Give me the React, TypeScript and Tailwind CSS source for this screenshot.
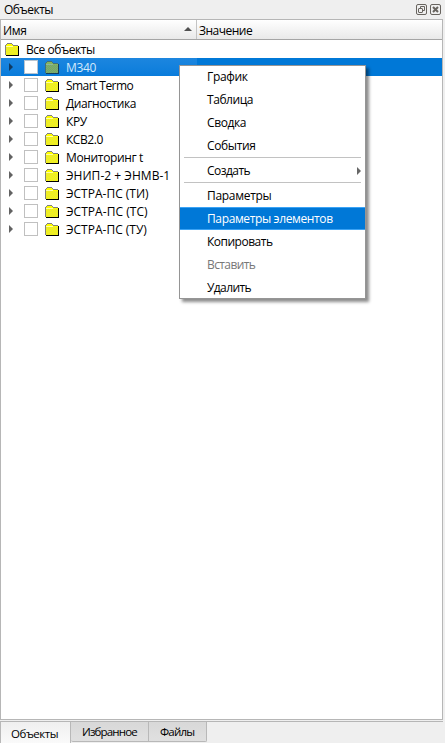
import React from "react";

const objects: [string, string][] = [
  ["M340", "tracking-[-0.3px]"],
  ["Smart Termo", "tracking-[-0.55px]"],
  ["Диагностика", "tracking-[-0.4px]"],
  ["КРУ", "tracking-[-0.4px]"],
  ["КСВ2.0", "tracking-[-0.45px]"],
  ["Мониторинг t", "tracking-[-0.35px]"],
  ["ЭНИП-2 + ЭНМВ-1", "tracking-[0.03px]"],
  ["ЭСТРА-ПС (ТИ)", "tracking-[0px]"],
  ["ЭСТРА-ПС (ТС)", "tracking-[0.04px]"],
  ["ЭСТРА-ПС (ТУ)", "tracking-[0px]"],
];

function Folder({ selected = false }: { selected?: boolean }) {
  const light = selected ? "#86b55e" : "#ffff00";
  const dither = selected ? "#6f9f78" : "#dede48";
  const edge = selected ? "#456f78" : "#808080";
  const rows = [4, 5, 6, 7, 8, 9, 10, 11];
  return (
    <svg width="14" height="13" viewBox="0 0 14 13" shapeRendering="crispEdges" className="block shrink-0">
      <path d="M1 2H2V1H3V1H7V2H8V3H13V12H1Z" fill={light} />
      {rows.map((y) =>
        [0, 2, 4, 6, 8, 10].map((x) => (
          <rect key={`${x}-${y}`} x={1 + x + (y % 2)} y={y} width="1" height="1" fill={dither} />
        ))
      )}
      <path d="M0 2H1V12H0ZM1 1H2V2H1ZM2 0H7V1H2ZM7 1H8V2H7ZM8 2H13V3H8Z" fill={edge} />
      <path d="M1 3H8V4H1Z" fill={selected ? "#8fb6a0" : "#ffffa0"} />
      <path d="M13 3H14V13H1V12H13Z" fill={selected ? "#153d5c" : "#000"} />
    </svg>
  );
}

function Header() {
  return (
    <div className="flex h-5 shrink-0 border-b border-[#a5a5a5] bg-linear-to-b from-white to-[#e9e9e9] leading-[22px]">
      <div className="flex w-[196px] justify-between border-r border-[#c4c4c4] pl-0.5">
        <span className="tracking-[-0.3px]">Имя</span>
        <svg width="8" height="4" viewBox="0 0 8 4" className="mt-[7px] mr-1">
          <path d="M4 0L8 4H0Z" fill="#505050" />
        </svg>
      </div>
      <span className="pl-0.5 tracking-[-0.5px]">Значение</span>
    </div>
  );
}

function ObjectRow({ name, tracking, selected }: { name: string; tracking: string; selected: boolean }) {
  return (
    <div className={`flex h-[18px] items-center ${selected ? "bg-[#0078d7] text-[#d3e9fb]" : ""}`}>
      <div className={`flex h-full w-[196px] items-center ${selected ? "bg-linear-to-b from-[#1c86df] to-[#087cdb]" : ""}`}>
        <svg width="4" height="8" viewBox="0 0 4 8" className="ml-2">
          <path d="M0 0L4 4L0 8Z" fill={selected ? "#103a60" : "#626262"} />
        </svg>
        <span className={`ml-[11px] size-[14px] border bg-white ${selected ? "border-[#b8c4d0]" : "border-[#c0c0c0]"}`} />
        <span className="ml-[7px]"><Folder selected={selected} /></span>
        <span className={`ml-[7px] pt-0.5 whitespace-nowrap ${tracking}`}>{name}</span>
      </div>
    </div>
  );
}

function MenuItem({ label, tracking, state }: { label: string; tracking: string; state?: "active" | "disabled" | "sub" }) {
  return (
    <div
      className={`flex h-[23px] items-center justify-between whitespace-nowrap ${
        state === "active"
          ? "border border-[#3ba3f5] bg-[#0078d7] pl-[27px] text-white"
          : "pt-px pr-[5px] pl-7"
      } ${state === "disabled" ? "text-[#777]" : ""}`}
    >
      <span className={tracking}>{label}</span>
      {state === "sub" && (
        <svg width="4" height="8" viewBox="0 0 4 8"><path d="M0 0L4 4L0 8Z" fill="#666" /></svg>
      )}
    </div>
  );
}

function Separator() {
  return <div className="mx-[5px] h-0.5 border-t border-[#c2c2c2]" />;
}

function ContextMenu() {
  return (
    <div className="absolute top-[65px] left-[179px] h-[234px] w-[187px] bg-white shadow-[3px_3px_3px_rgba(0,0,0,0.45)]">
      <div className="pointer-events-none absolute inset-0 border border-[#959595]" />
      <MenuItem label="График" tracking="tracking-[-0.35px]" />
      <MenuItem label="Таблица" tracking="tracking-[-0.45px]" />
      <MenuItem label="Сводка" tracking="tracking-[-0.4px]" />
      <MenuItem label="События" tracking="tracking-[-0.35px]" />
      <Separator />
      <MenuItem label="Создать" tracking="tracking-[-0.55px]" state="sub" />
      <Separator />
      <MenuItem label="Параметры" tracking="tracking-[-0.3px]" />
      <MenuItem label="Параметры элементов" tracking="tracking-[-0.37px]" state="active" />
      <MenuItem label="Копировать" tracking="tracking-[-0.5px]" />
      <MenuItem label="Вставить" tracking="tracking-[-0.6px]" state="disabled" />
      <MenuItem label="Удалить" tracking="tracking-[-0.6px]" />
    </div>
  );
}

export default function App() {
  return (
    <div className="relative flex h-[743px] w-[445px] flex-col overflow-hidden bg-[#efefef] font-['Open_Sans','Noto_Sans',sans-serif] text-[12px] leading-[18px] text-black">
      <div className="flex h-[19px] shrink-0 items-center justify-between pr-[4px] pl-1">
        <span className="pt-px tracking-[-0.5px]">Объекты</span>
        <div className="flex gap-[3px]">
          <svg width="11" height="11" viewBox="0 0 11 11" fill="none" stroke="#68645f">
            <rect x=".5" y=".5" width="10" height="10" rx="1.5" />
            <rect x="2.5" y="4.5" width="4" height="4" rx=".5" />
            <path d="M4.5 4V2.5H8.5V6.5H7" />
          </svg>
          <svg width="11" height="11" viewBox="0 0 11 11" fill="none" stroke="#68645f">
            <rect x=".5" y=".5" width="10" height="10" rx="1.5" />
            <path d="M3 3L8 8M8 3L3 8" strokeWidth="2" />
          </svg>
        </div>
      </div>
      <div className="mr-[2px] flex h-[701px] shrink-0 flex-col border border-[#b6b6b6] bg-white">
        <Header />
        <div className="flex h-[18px] items-center pl-1">
          <Folder />
          <span className="ml-[7px] pt-0.5 tracking-[-0.45px]">Все объекты</span>
        </div>
        {objects.map(([name, tracking], i) => (
          <ObjectRow key={name} name={name} tracking={tracking} selected={i === 0} />
        ))}
      </div>
      <div className="mt-px mr-[2px] flex h-[22px] shrink-0 items-start border-t border-[#b6b6b6] text-[11.5px]">
        <div className="h-full w-[71px] border-r border-l border-[#b8b8b8] bg-linear-to-b from-[#efefef] to-[#fafafa] pt-[3px] pl-2.5 tracking-[-0.45px]">Объекты</div>
        <div className="h-[20px] w-[78px] rounded-bl-xs border-r border-b border-[#b8b8b8] bg-linear-to-b from-[#d8d8d8] to-[#e0e0e0] pt-px pl-[11px] tracking-[-0.85px]">Избранное</div>
        <div className="h-[20px] w-[58px] rounded-br-xs border-r border-b border-[#b8b8b8] bg-linear-to-b from-[#d8d8d8] to-[#e0e0e0] pt-px pl-[11px] tracking-[-0.8px]">Файлы</div>
      </div>
      <ContextMenu />
    </div>
  );
}
